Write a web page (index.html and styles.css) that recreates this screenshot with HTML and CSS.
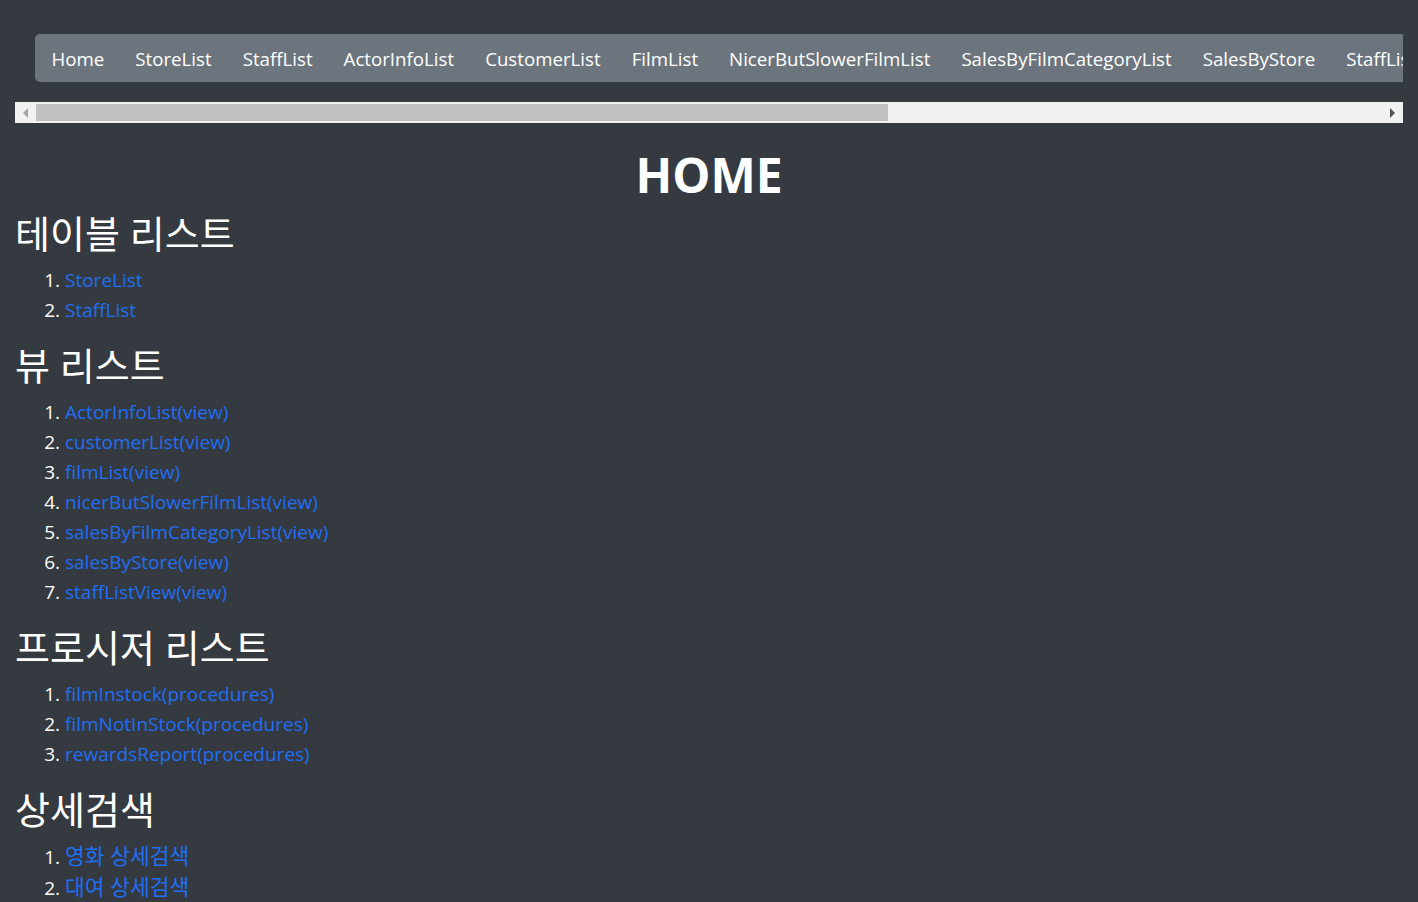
FILE: index.html
```html
<!DOCTYPE html>
<html lang="ko">
<head>
<meta charset="utf-8">
<title>HOME</title>
<link rel="stylesheet" href="styles.css">
</head>
<body>
<div class="page">
  <div class="nav-scroll">
    <div class="nav-viewport">
      <div class="nav-track">
        <nav class="menu">
          <a class="menu-link" href="#">Home</a>
          <a class="menu-link" href="#">StoreList</a>
          <a class="menu-link" href="#">StaffList</a>
          <a class="menu-link" href="#">ActorInfoList</a>
          <a class="menu-link" href="#">CustomerList</a>
          <a class="menu-link" href="#">FilmList</a>
          <a class="menu-link" href="#">NicerButSlowerFilmList</a>
          <a class="menu-link" href="#">SalesByFilmCategoryList</a>
          <a class="menu-link" href="#">SalesByStore</a>
          <a class="menu-link" href="#">StaffListView</a>
          <a class="menu-link" href="#">FilmInStock</a>
          <a class="menu-link" href="#">FilmNotInStock</a>
          <a class="menu-link" href="#">RewardsReport</a>
        </nav>
      </div>
    </div>
    <div class="scrollbar">
      <span class="sb-btn"><span class="tri tri-left"></span></span>
      <span class="sb-track"><span class="sb-thumb"></span></span>
      <span class="sb-btn"><span class="tri tri-right"></span></span>
    </div>
  </div>

  <h1 class="title">HOME</h1>

  <h2 class="section-title">테이블 리스트</h2>
  <ol class="link-list">
    <li><a href="#">StoreList</a></li>
    <li><a href="#">StaffList</a></li>
  </ol>

  <h2 class="section-title">뷰 리스트</h2>
  <ol class="link-list">
    <li><a href="#">ActorInfoList(view)</a></li>
    <li><a href="#">customerList(view)</a></li>
    <li><a href="#">filmList(view)</a></li>
    <li><a href="#">nicerButSlowerFilmList(view)</a></li>
    <li><a href="#">salesByFilmCategoryList(view)</a></li>
    <li><a href="#">salesByStore(view)</a></li>
    <li><a href="#">staffListView(view)</a></li>
  </ol>

  <h2 class="section-title">프로시저 리스트</h2>
  <ol class="link-list">
    <li><a href="#">filmInstock(procedures)</a></li>
    <li><a href="#">filmNotInStock(procedures)</a></li>
    <li><a href="#">rewardsReport(procedures)</a></li>
  </ol>

  <h2 class="section-title">상세검색</h2>
  <ol class="link-list">
    <li><a class="ko" href="#">영화 상세검색</a></li>
    <li><a class="ko" href="#">대여 상세검색</a></li>
  </ol>
</div>
</body>
</html>
```

FILE: styles.css
```css
* { box-sizing: border-box; }

html, body {
  margin: 0;
  background: #343a40;
}

body {
  color: #fff;
  font-family: "Open Sans", "Noto Sans CJK KR", sans-serif;
  font-size: 19px;
  line-height: 30px;
}

.page {
  padding: 14px 15px 0 15px;
}

.nav-scroll {
  width: 100%;
}

.nav-viewport {
  overflow: hidden;
}

.nav-track {
  display: flex;
  width: max-content;
  padding: 20px 0 20px 20px;
}

.menu {
  display: flex;
  background: #6c757d;
  border-radius: 5px;
  padding: 0 1px;
}

.menu-link {
  display: block;
  padding: 10px 15.5px 8px;
  color: #fff;
  text-decoration: none;
  white-space: nowrap;
  font-size: 18.7px;
  line-height: 30px;
}

.scrollbar {
  display: flex;
  height: 21px;
  background: #f1f1f1;
}

.sb-btn {
  flex: 0 0 21px;
  display: flex;
  align-items: center;
  justify-content: center;
}

.tri {
  width: 0;
  height: 0;
  border-top: 5px solid transparent;
  border-bottom: 5px solid transparent;
}

.tri-left { border-right: 5px solid #a3a3a3; }
.tri-right { border-left: 5px solid #505050; }

.sb-track {
  flex: 1;
  display: flex;
  padding: 2px 0;
}

.sb-thumb {
  width: 63.3%;
  background: #c1c1c1;
}

.title {
  margin: 23px 0 5px;
  text-align: center;
  font-size: 48px;
  line-height: 58px;
  font-weight: 700;
}

.section-title {
  margin: 0 0 8px;
  font-size: 38px;
  line-height: 48px;
  font-weight: 400;
}

.link-list {
  margin: 0 0 16px;
  padding-left: 50px;
}

.link-list a {
  color: #1f6ef5;
  text-decoration: none;
}

.link-list .ko {
  font-size: 21.5px;
}
```
